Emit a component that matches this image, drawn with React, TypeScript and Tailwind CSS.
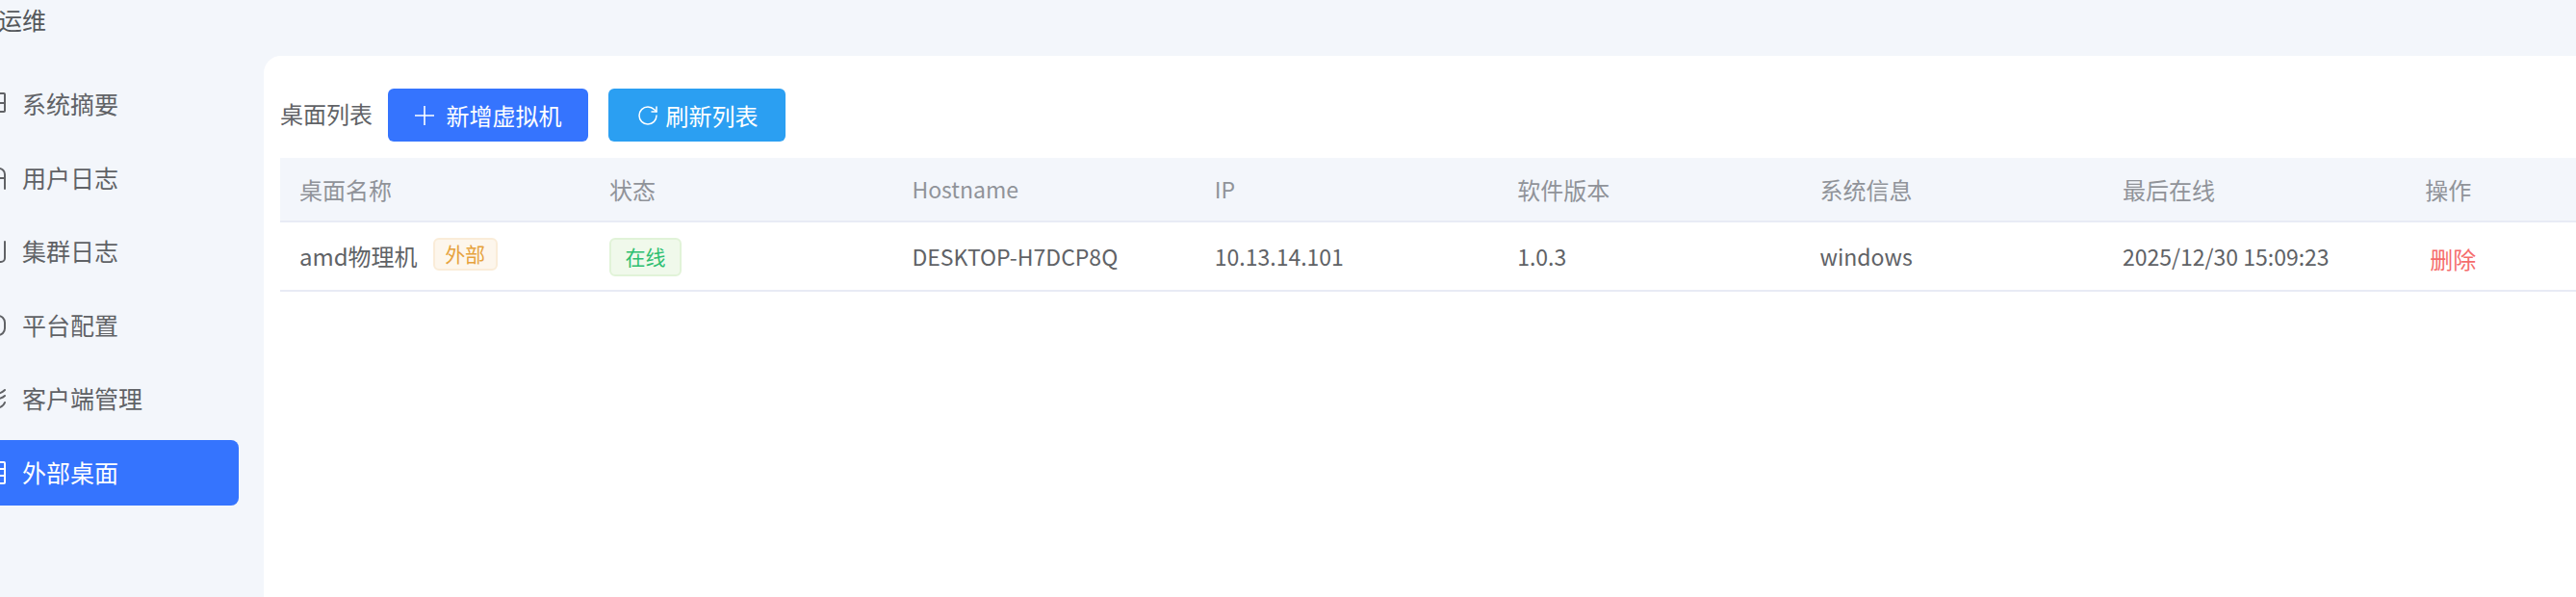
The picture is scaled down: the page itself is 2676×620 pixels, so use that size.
import type { ReactNode } from 'react';
import { RotateCw } from 'lucide-react';

// Only the right edge of each menu icon is visible, the sidebar is scrolled past the page edge
const MENU: { label: string; icon: ReactNode; active?: boolean }[] = [
  {
    label: '系统摘要',
    icon: (
      <>
        <rect x="3" y="1" width="20" height="19" rx="1" />
        <path d="M3 11h20" />
      </>
    ),
  },
  { label: '用户日志', icon: <path d="M2 22V7a5 5 0 0 1 5-5h10a6 6 0 0 1 6 6v15M4 12h19" /> },
  { label: '集群日志', icon: <path d="M23 2v17a4 4 0 0 1-4 4h-6" /> },
  { label: '平台配置', icon: <path d="M10 2h6a7 7 0 0 1 7 7v6a7 7 0 0 1-7 7h-6" /> },
  { label: '客户端管理', icon: <path d="M16 7c3-1 5-2 7-4M14 13c4-1 7-2 9-4M15 22c4-1 7-3 8-6" /> },
  {
    label: '外部桌面',
    active: true,
    icon: (
      <>
        <rect x="3" y="1" width="20" height="22" rx="1" />
        <path d="M3 8h20M3 15h20" />
      </>
    ),
  },
];

const COLUMNS = ['桌面名称', '状态', 'Hostname', 'IP', '软件版本', '系统信息', '最后在线', '操作'];

const cell = 'w-[314.4px] shrink-0 pl-5';
const latinCell = 'w-[314.4px] shrink-0 pl-5 text-[23px]';

export default function App() {
  return (
    <div className="flex h-[620px] w-[2676px] overflow-hidden bg-[#f3f6fb] font-['Noto_Sans_CJK_SC','Noto_Sans',sans-serif] text-[24px] text-[#606266]">
      {/* Sidebar */}
      <aside className="w-[274px] shrink-0">
        <div className="h-[58px] pt-[3px] text-[25px] leading-[34px] text-[#55585c]">
          <span className="ml-[-2px] block">运维</span>
        </div>
        <nav className="mt-[16px] ml-[-24px] w-[272px]">
          {MENU.map(({ label, icon, active }) => (
            <div
              key={label}
              className={`mb-[8.5px] flex h-[68px] items-center rounded-lg pl-[6px] text-[25px] ${active ? 'bg-[#3574fe] text-white' : ''}`}
            >
              <svg
                viewBox="0 0 24 24"
                fill="none"
                stroke="currentColor"
                strokeWidth="2"
                strokeLinecap="round"
                className="h-6 w-6 shrink-0"
              >
                {icon}
              </svg>
              <span className="ml-[17px]">{label}</span>
            </div>
          ))}
        </nav>
      </aside>

      {/* Content card */}
      <main className="mt-[58px] flex-1 overflow-hidden rounded-tl-[18px] bg-white pl-[17px] pt-[34px]">
        <div className="flex h-[55px] items-center">
          <span className="mr-4 mt-[-4px]">桌面列表</span>
          <button className="flex h-[55px] w-[208px] items-center justify-center rounded-md bg-[#3574fe] text-white">
            <svg viewBox="0 0 20 20" fill="none" stroke="currentColor" strokeWidth="1.6" className="h-5 w-5 shrink-0">
              <path d="M10 0v20M0 10h20" />
            </svg>
            <span className="ml-[13px]">新增虚拟机</span>
          </button>
          <button className="ml-[21px] flex h-[55px] w-[184px] items-center justify-center rounded-md bg-[#2b9ff2] text-white">
            <RotateCw size={24} strokeWidth={1.5} className="shrink-0" />
            <span className="ml-[7px]">刷新列表</span>
          </button>
        </div>

        <div className="mt-[17px] w-[2600px]">
          <div className="flex h-[67px] items-center border-b-2 border-[#e8ebf5] bg-[#f3f6fb] text-[#909399]">
            {COLUMNS.map((col, i) => (
              <div key={col} className={i === 0 ? 'w-[322px] shrink-0 pl-5' : col === 'Hostname' || col === 'IP' ? latinCell : cell}>
                {col}
              </div>
            ))}
          </div>
          <div className="flex h-[72px] items-center border-b-2 border-[#e8ebf5]">
            <div className="flex w-[322px] shrink-0 items-center pl-5">
              amd物理机
              <span className="ml-4 mt-[-4px] flex h-[34px] w-[67px] items-center justify-center rounded-md border-2 border-[#faecd8] bg-[#fdf6ec] text-[21px] text-[#e6a23c]">
                外部
              </span>
            </div>
            <div className={cell}>
              <span className="mt-[2px] flex h-[40px] w-[75px] items-center justify-center rounded-md border-2 border-[#e1f3d8] bg-[#f0f9eb] text-[21px] text-[#2fbf71]">
                在线
              </span>
            </div>
            <div className={latinCell}>DESKTOP-H7DCP8Q</div>
            <div className={latinCell}>10.13.14.101</div>
            <div className={latinCell}>1.0.3</div>
            <div className={latinCell}>windows</div>
            <div className={latinCell}>2025/12/30 15:09:23</div>
            <div className={cell}>
              <span className="ml-[5px] mt-[5px] block text-[#f56c6c]">删除</span>
            </div>
          </div>
        </div>
      </main>
    </div>
  );
}
